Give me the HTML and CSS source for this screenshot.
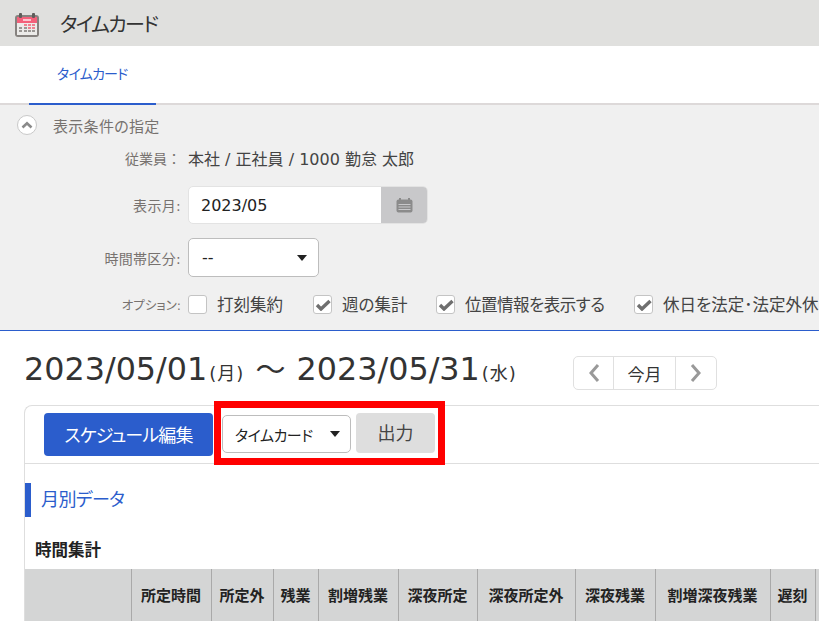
FILE: index.html
```html
<!DOCTYPE html>
<html lang="ja">
<head>
    <meta charset="UTF-8">
    <meta name="viewport" content="width=device-width, initial-scale=1.0">
    <title>タイムカード</title>
    <link rel="stylesheet" href="styles.css">
</head>
<body>
    <div class="page">
        <header class="app-header">
            <svg class="app-icon" width="26" height="26" viewBox="0 0 26 26">
                <rect x="1" y="3" width="24" height="22" rx="3" fill="#86827f"/>
                <rect x="3" y="5" width="20" height="18" fill="#ecebe9"/>
                <rect x="3" y="5" width="20" height="6" fill="#f4607a"/>
                <rect x="5" y="1" width="3" height="5" rx="1" fill="#5f5c5a"/>
                <rect x="18" y="1" width="3" height="5" rx="1" fill="#5f5c5a"/>
                <rect x="9" y="7" width="8" height="2" fill="#fbc5cf"/>
                <g fill="#f1808f">
                    <rect x="10" y="12" width="3" height="2"/>
                    <rect x="14" y="12" width="3" height="2"/>
                    <rect x="18" y="12" width="3" height="2"/>
                    <rect x="14" y="15" width="3" height="2"/>
                    <rect x="18" y="15" width="3" height="2"/>
                </g>
                <g fill="#9a9794">
                    <rect x="5" y="15" width="3" height="2"/>
                    <rect x="10" y="15" width="3" height="2"/>
                    <rect x="5" y="18" width="3" height="2"/>
                    <rect x="10" y="18" width="3" height="2"/>
                    <rect x="14" y="18" width="3" height="2"/>
                    <rect x="18" y="18" width="3" height="2"/>
                </g>
            </svg>
            <h1 class="app-title">タイムカード</h1>
        </header>

        <nav class="tabs">
            <a class="tab active">タイムカード</a>
        </nav>

        <section class="filter">
            <div class="filter-head">
                <span class="collapse-btn">
                    <svg width="12" height="8" viewBox="0 0 12 8"><path d="M1.5 6.5 L6 2.2 L10.5 6.5" fill="none" stroke="#8a8a8a" stroke-width="2.6"/></svg>
                </span>
                <span class="filter-title">表示条件の指定</span>
            </div>

            <div class="filter-row row-employee">
                <span class="filter-label wide-colon">従業員：</span>
                <span class="filter-value">本社 / 正社員 / 1000 勤怠 太郎</span>
            </div>

            <div class="filter-row row-month">
                <span class="filter-label">表示月:</span>
                <div class="month-input">
                    <span class="month-text">2023/05</span>
                    <span class="month-btn">
                        <svg width="17" height="15" viewBox="0 0 17 15">
                            <rect x="0.5" y="1.5" width="16" height="13" rx="2" fill="#8b8b8b"/>
                            <rect x="3" y="0" width="2" height="3" fill="#8b8b8b"/>
                            <rect x="12" y="0" width="2" height="3" fill="#8b8b8b"/>
                            <path d="M2.5 6.5 H14.5 M2.5 9 H14.5 M2.5 11.5 H14.5" stroke="#c8c8ca" stroke-width="1"/>
                        </svg>
                    </span>
                </div>
            </div>

            <div class="filter-row row-zone">
                <span class="filter-label">時間帯区分:</span>
                <div class="select zone-select">
                    <span>--</span>
                    <i class="caret"></i>
                </div>
            </div>

            <div class="filter-row row-options">
                <span class="filter-label small-label">オプション:</span>
                <div class="options">
                    <label class="option opt-1"><span class="checkbox"></span>打刻集約</label>
                    <label class="option opt-2">
                        <span class="checkbox"><svg width="16" height="14" viewBox="0 0 16 14"><path d="M2 8 L6 12 L14.5 4" fill="none" stroke="#6f6f6f" stroke-width="3.4"/></svg></span>週の集計
                    </label>
                    <label class="option opt-3">
                        <span class="checkbox"><svg width="16" height="14" viewBox="0 0 16 14"><path d="M2 8 L6 12 L14.5 4" fill="none" stroke="#6f6f6f" stroke-width="3.4"/></svg></span>位置情報を表示する
                    </label>
                    <label class="option">
                        <span class="checkbox"><svg width="16" height="14" viewBox="0 0 16 14"><path d="M2 8 L6 12 L14.5 4" fill="none" stroke="#6f6f6f" stroke-width="3.4"/></svg></span>休日を法定･法定外休
                    </label>
                </div>
            </div>
        </section>

        <main class="content">
            <div class="period">
                <h2 class="period-title">2023/05/01<small>(月)</small> <span class="tilde">～</span> 2023/05/31<small>(水)</small></h2>
                <div class="pager">
                    <span class="pager-btn pager-arrow pager-prev">
                        <svg width="12" height="20" viewBox="0 0 12 20"><path d="M10 2 L3 10 L10 18" fill="none" stroke="#999" stroke-width="3"/></svg>
                    </span>
                    <span class="pager-btn pager-today">今月</span>
                    <span class="pager-btn pager-arrow">
                        <svg width="12" height="20" viewBox="0 0 12 20"><path d="M2 2 L9 10 L2 18" fill="none" stroke="#999" stroke-width="3"/></svg>
                    </span>
                </div>
            </div>

            <div class="card">
                <div class="toolbar">
                    <button class="btn btn-primary">スケジュール編集</button>
                    <div class="select type-select">
                        <span>タイムカード</span>
                        <i class="caret"></i>
                    </div>
                    <button class="btn btn-gray">出力</button>
                    <div class="highlight"></div>
                </div>

                <h3 class="section-title">月別データ</h3>
                <h4 class="table-title">時間集計</h4>

                <table class="summary">
                    <thead>
                        <tr>
                            <th class="col-0"></th>
                            <th class="col-1">所定時間</th>
                            <th class="col-2">所定外</th>
                            <th class="col-3">残業</th>
                            <th class="col-4">割増残業</th>
                            <th class="col-5">深夜所定</th>
                            <th class="col-6">深夜所定外</th>
                            <th class="col-7">深夜残業</th>
                            <th class="col-8">割増深夜残業</th>
                            <th class="col-9">遅刻</th>
                            <th class="col-10"></th>
                        </tr>
                    </thead>
                </table>
            </div>
        </main>
    </div>
</body>
</html>
```

FILE: styles.css
```css
html, body {
    margin: 0;
    padding: 0;
    height: 100%;
    overflow: hidden;
}
body {
    font-family: "DejaVu Sans", "Noto Sans CJK JP", sans-serif;
    font-feature-settings: "palt";
    color: #333;
    background: #fff;
}
.page {
    width: 819px;
    height: 621px;
    overflow: hidden;
}
.app-header {
    height: 46px;
    background: #e0e0de;
    display: flex;
    align-items: center;
    padding-left: 14px;
}
.app-icon {
    display: block;
    margin-top: 4px;
}
.app-title {
    margin: 0 0 0 20px;
    font-size: 20px;
    font-weight: normal;
    letter-spacing: -1.7px;
    color: #333;
}
.tabs {
    height: 57px;
    border-bottom: 2px solid #ddd9d9;
    padding-left: 29px;
    display: flex;
}
.tab {
    width: 127px;
    height: 59px;
    box-sizing: border-box;
    padding: 18px 0 0 28px;
    font-size: 14px;
    line-height: 20px;
    letter-spacing: -0.8px;
    color: #2b5dcc;
    border-bottom: 2px solid #2b5dcc;
}
.filter {
    height: 226px;
    box-sizing: border-box;
    background: #f0f0f0;
    border-bottom: 1px solid #2b5dcc;
    padding-top: 8px;
    white-space: nowrap;
    overflow: hidden;
}
.filter-head {
    display: flex;
    align-items: center;
    padding-left: 16px;
    height: 24px;
}
.collapse-btn {
    width: 20px;
    height: 20px;
    box-sizing: border-box;
    border: 1px solid #c9c9c9;
    border-radius: 50%;
    background: #fff;
    display: flex;
    align-items: center;
    justify-content: center;
    margin: 0 1px;
}
.filter-title {
    margin-left: 15px;
    font-size: 15px;
    letter-spacing: 0.3px;
    color: #77726f;
}
.filter-row {
    display: flex;
    align-items: center;
}
.filter-label {
    width: 188px;
    flex: none;
    text-align: right;
    font-size: 14px;
    letter-spacing: 0.3px;
    color: #77726f;
    padding-right: 7px;
    box-sizing: border-box;
}
.wide-colon {
    font-feature-settings: normal;
    letter-spacing: 0;
}
.small-label {
    font-size: 12.5px;
    letter-spacing: 0;
}
.row-employee {
    height: 24px;
    margin-top: 9px;
}
.filter-value {
    font-size: 16px;
    color: #444;
}
.row-month {
    margin-top: 16px;
}
.month-input {
    display: flex;
    width: 240px;
    height: 38px;
    box-sizing: border-box;
    background: #fff;
    border: 1px solid #e3e3e3;
    border-radius: 5px;
    overflow: hidden;
}
.month-text {
    flex: 1;
    padding-left: 12px;
    font-size: 16px;
    line-height: 37px;
    color: #222;
}
.month-btn {
    width: 46px;
    background: #c8c8ca;
    display: flex;
    align-items: center;
    justify-content: center;
}
.row-zone {
    margin-top: 14px;
}
.select {
    display: flex;
    align-items: center;
    justify-content: space-between;
    box-sizing: border-box;
    background: #fff;
    border: 1px solid #bdbdbd;
    border-radius: 5px;
    color: #222;
}
.zone-select {
    width: 131px;
    height: 39px;
    padding: 0 11px 0 13px;
    font-size: 16px;
}
.caret {
    width: 0;
    height: 0;
    border-left: 5px solid transparent;
    border-right: 5px solid transparent;
    border-top: 6px solid #222;
}
.row-options {
    margin-top: 16px;
    height: 22px;
}
.options {
    display: flex;
    align-items: center;
    font-size: 16.5px;
    color: #444;
}
.option {
    display: flex;
    align-items: center;
}
.opt-1 {
    width: 125px;
}
.opt-2 {
    width: 123px;
}
.opt-3 {
    width: 198px;
    letter-spacing: -0.5px;
}
.checkbox {
    width: 19px;
    height: 19px;
    box-sizing: border-box;
    margin-right: 10px;
    background: #fff;
    border: 1px solid #c4c4c4;
    border-radius: 3px;
    display: flex;
    align-items: center;
    justify-content: center;
    flex: none;
}
.content {
    padding-left: 24px;
}
.period {
    display: flex;
    align-items: center;
    height: 74px;
    white-space: nowrap;
}
.period-title {
    margin: 0 0 2px;
    font-size: 31.8px;
    font-weight: normal;
    color: #333;
    width: 549px;
    flex: none;
}
.period-title small {
    font-size: 18px;
    letter-spacing: 1px;
    margin-left: 2px;
}
.tilde {
    font-size: 30px;
    margin: 0 1px;
}
.pager {
    display: flex;
    height: 34px;
    box-sizing: border-box;
    border: 1px solid #e0e0e0;
    border-radius: 5px;
    background: #fff;
    margin-top: 10px;
}
.pager-btn {
    display: flex;
    align-items: center;
    justify-content: center;
    font-size: 17px;
}
.pager-arrow {
    width: 40px;
}
.pager-prev {
    width: 39px;
}
.pager-today {
    width: 63px;
    box-sizing: border-box;
    border-left: 1px solid #e0e0e0;
    border-right: 1px solid #e0e0e0;
}
.card {
    width: 1100px;
    border: 1px solid #dedede;
    border-radius: 8px 0 0 0;
    border-right: none;
    border-bottom: none;
    height: 300px;
}
.toolbar {
    position: relative;
    height: 58px;
    box-sizing: border-box;
    border-bottom: 1px solid #dedede;
    display: flex;
    align-items: flex-start;
    padding-left: 19px;
}
.btn {
    border: none;
    font-family: inherit;
    font-feature-settings: inherit;
    border-radius: 4px;
    padding: 0 0 2px;
}
.btn-primary {
    width: 169px;
    height: 43px;
    margin-top: 7px;
    background: #2b5dcc;
    color: #fff;
    font-size: 18px;
    letter-spacing: -0.9px;
}
.type-select {
    width: 129px;
    height: 38px;
    margin: 9px 0 0 9px;
    padding: 0 10px 0 12px;
    font-size: 15px;
    letter-spacing: -0.5px;
}
.btn-gray {
    width: 79px;
    height: 40px;
    margin: 7px 0 0 5px;
    background: #dedede;
    color: #444;
    font-size: 18px;
}
.highlight {
    position: absolute;
    left: 189px;
    top: -5px;
    width: 217px;
    height: 50px;
    border: 7px solid #f00;
}
.section-title {
    margin: 19px 0 0;
    height: 34px;
    border-left: 6px solid #2b5dcc;
    padding-left: 10px;
    font-size: 18px;
    line-height: 34px;
    font-weight: normal;
    letter-spacing: -0.6px;
    color: #2b5dcc;
}
.table-title {
    margin: 24px 0 0 10px;
    font-size: 16.5px;
    line-height: 20px;
    color: #222;
}
.summary {
    margin-top: 8px;
    border-collapse: collapse;
    table-layout: fixed;
    width: 870px;
}
.summary th {
    box-sizing: border-box;
    height: 52px;
    padding: 0 0 2px;
    background: #d4d5d5;
    border-right: 1px solid #a9a9a9;
    font-size: 15px;
    color: #222;
    white-space: nowrap;
}
.col-0 { width: 106px; }
.col-1 { width: 80px; }
.col-2 { width: 62px; }
.col-3 { width: 45px; }
.col-4 { width: 80px; }
.col-5 { width: 79px; }
.col-6 { width: 98px; }
.col-7 { width: 80px; }
.col-8 { width: 115px; }
.col-9 { width: 45px; }
.col-10 { width: 80px; }
```
